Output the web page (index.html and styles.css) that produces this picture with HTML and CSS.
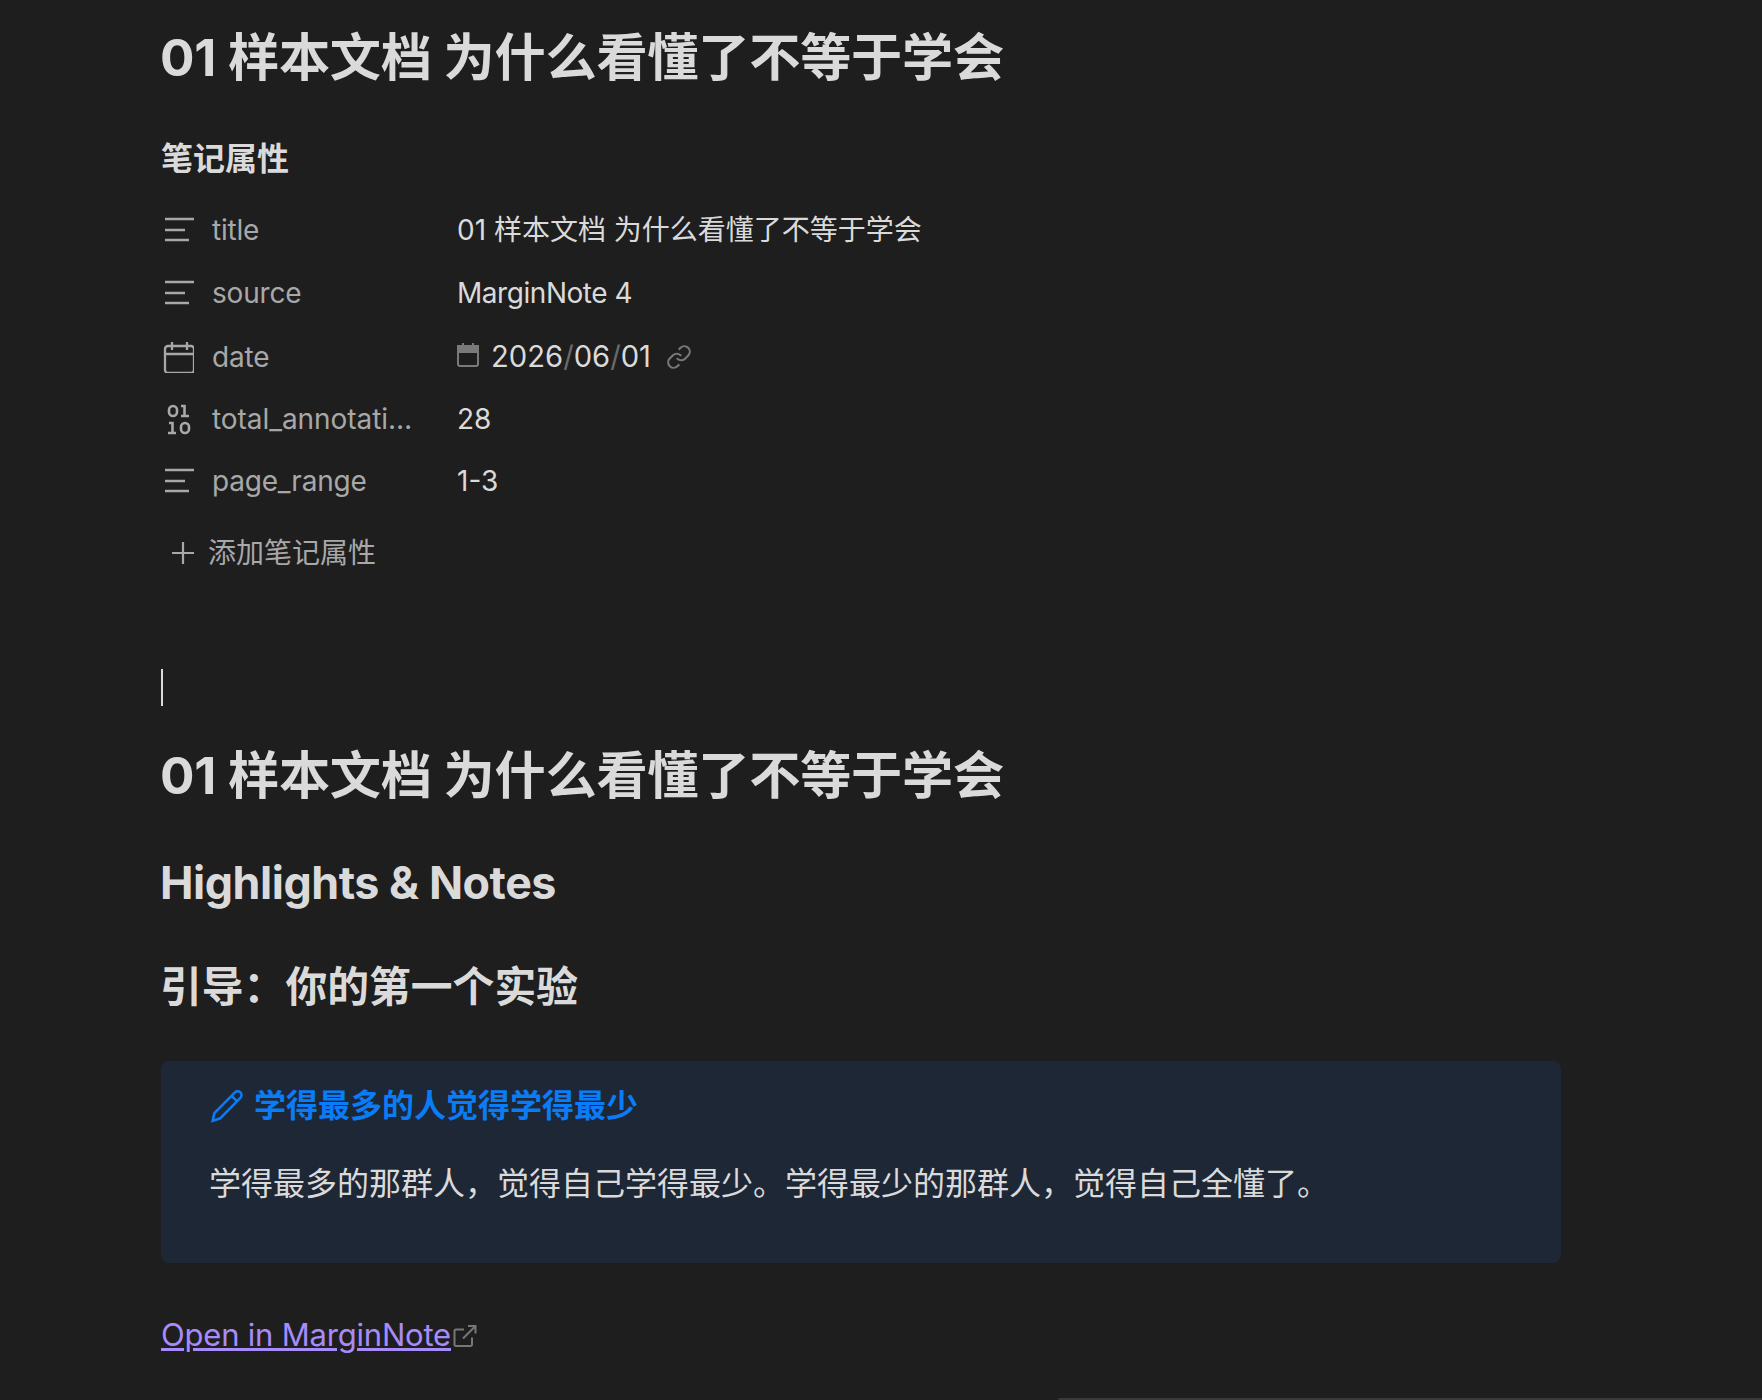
FILE: index.html
```html
<!DOCTYPE html>
<html lang="zh-CN">

<head>
  <meta charset="utf-8">
  <title>01 样本文档 为什么看懂了不等于学会</title>
  <link rel="stylesheet" href="styles.css">
</head>

<body>

<div class="note">
  <h1 class="note-title">01 样本文档 为什么看懂了不等于学会</h1>

  <div class="props-heading">笔记属性</div>
  <div class="props">
    <div class="prop">
      <div class="prop-key">
        <svg class="prop-icon" viewBox="0 0 32 32"><path d="M3 5h29M3 16h20M3 26h24"/></svg>
        <span class="prop-name">title</span>
      </div>
      <div class="prop-value">01 样本文档 为什么看懂了不等于学会</div>
    </div>
    <div class="prop">
      <div class="prop-key">
        <svg class="prop-icon" viewBox="0 0 32 32"><path d="M3 5h29M3 16h20M3 26h24"/></svg>
        <span class="prop-name">source</span>
      </div>
      <div class="prop-value prop-latin">MarginNote 4</div>
    </div>
    <div class="prop">
      <div class="prop-key">
        <svg class="prop-icon" viewBox="0 0 32 32"><rect x="3" y="5" width="29" height="27" rx="3"/><path d="M3 13h29M10 1v8M25 1v8"/></svg>
        <span class="prop-name">date</span>
      </div>
      <div class="prop-value prop-date">
        <svg class="date-cal" viewBox="0 0 22 24"><path class="date-cal-top" d="M1 3h20v6H1z"/><rect x="1" y="4" width="20" height="19" rx="2"/><path d="M6 0v4M16 0v4"/></svg>
        <span class="date-text">2026<i>/</i>06<i>/</i>01</span>
        <svg class="date-link" viewBox="0 0 24 24"><path d="M10 13a5 5 0 0 0 7.54.54l3-3a5 5 0 0 0-7.07-7.07l-1.72 1.71"/><path d="M14 11a5 5 0 0 0-7.54-.54l-3 3a5 5 0 0 0 7.07 7.07l1.71-1.71"/></svg>
      </div>
    </div>
    <div class="prop prop-number">
      <div class="prop-key">
        <svg class="prop-icon binary" viewBox="0 0 32 32"><rect x="7" y="3" width="8" height="10" rx="4"/><path d="M19 3h3.5v10M19 13h8M7 20h3.5v10M6 30h8"/><rect x="19" y="20" width="8" height="10" rx="4"/></svg>
        <span class="prop-name">total_annotati…</span>
      </div>
      <div class="prop-value">28</div>
    </div>
    <div class="prop prop-short">
      <div class="prop-key">
        <svg class="prop-icon" viewBox="0 0 32 32"><path d="M3 5h29M3 16h20M3 26h24"/></svg>
        <span class="prop-name">page_range</span>
      </div>
      <div class="prop-value">1-3</div>
    </div>
  </div>
  <div class="props-add">
    <svg class="add-icon" viewBox="0 0 24 24"><path d="M12 1v22M1 12h22"/></svg>
    <span>添加笔记属性</span>
  </div>

  <div class="caret"></div>

  <h1 class="body-h1">01 样本文档 为什么看懂了不等于学会</h1>
  <h2>Highlights &amp; Notes</h2>
  <h3>引导：你的第一个实验</h3>

  <div class="callout">
    <div class="callout-title">
      <svg class="callout-icon" viewBox="0 0 32 32"><path d="M23.5 3.2a3.6 3.6 0 0 1 5.1 5.1L9.6 27.6 2.5 30l1.6-7.2z"/><path d="M20.5 6.6l5 5"/></svg>
      <span>学得最多的人觉得学得最少</span>
    </div>
    <div class="callout-body">学得最多的那群人，觉得自己学得最少。学得最少的那群人，觉得自己全懂了。</div>
  </div>

  <p class="open-link">
    <a href="#">Open in MarginNote</a><svg class="ext-icon" viewBox="0 0 24 24"><path d="M19 13.5V21a1.5 1.5 0 0 1-1.5 1H3a1.5 1.5 0 0 1-1.5-1V7A1.5 1.5 0 0 1 3 5.5h8"/><path d="M15 2h7.5v7.5M22.5 2 10 14.5"/></svg>
  </p>
</div>

<div class="status-edge"></div>

</body>
</html>
```

FILE: styles.css
```css
html, body {
  margin: 0px;
  padding: 0px;
  height: 100%;
}

body {
  background-color: #1e1e1e;
  color: #dadada;
  font-family: Inter, "Noto Sans CJK SC", sans-serif;
  overflow: hidden;
}

svg {
  fill: none;
  stroke: currentColor;
  flex-shrink: 0;
}

.note {
  width: 1400px;
  margin-left: 161px;
  padding-top: 27px;
}

h1, h2, h3, p {
  margin: 0px;
}

h1 {
  margin-left: -1px;
  font-size: 51.2px;
  line-height: 60px;
  font-weight: 700;
  letter-spacing: -0.25px;
}

.props-heading {
  margin-top: 52px;
  font-size: 32px;
  line-height: 40px;
  font-weight: 600;
}

.props {
  margin-top: 19px;
}

.prop {
  display: flex;
  align-items: center;
  height: 63.5px;
  font-size: 28px;
  line-height: 40px;
}

.prop-number {
  height: 61px;
}

.prop-short {
  height: 62px;
}

.prop-key {
  display: flex;
  align-items: center;
  width: 296px;
  box-sizing: border-box;
  padding-left: 1px;
  color: #a8a8a8;
}

.prop-icon {
  width: 32px;
  height: 32px;
  margin-right: 18px;
  stroke-width: 2.3;
}

.binary {
  stroke-width: 2.6;
}

.prop-name {
  white-space: nowrap;
  letter-spacing: -0.2px;
}

.prop-number .prop-name {
  letter-spacing: -0.05px;
}

.prop-latin {
  letter-spacing: -0.45px;
}

.prop-date {
  display: flex;
  align-items: center;
}

.date-cal {
  width: 22px;
  height: 24px;
  margin-right: 12px;
  color: #7a7a7a;
  stroke-width: 2;
  position: relative;
  top: -2px;
}

.date-cal-top {
  fill: currentColor;
}

.date-text {
  font-size: 29.2px;
}

.date-text i {
  font-style: normal;
  color: #6a6a6a;
}

.date-link {
  width: 26px;
  height: 26px;
  margin-left: 15px;
  color: #777777;
  stroke-width: 2;
}

.props-add {
  display: flex;
  align-items: center;
  height: 62px;
  margin-top: 10px;
  padding-left: 10px;
  font-size: 28px;
  line-height: 40px;
  color: #a8a8a8;
}

.add-icon {
  width: 24px;
  height: 24px;
  margin-right: 13px;
  stroke-width: 2.2;
}

.caret {
  width: 2px;
  height: 37px;
  margin-top: 85px;
  background-color: #dadada;
}

.body-h1 {
  margin-top: 39px;
}

h2 {
  margin-top: 50px;
  margin-left: -1px;
  font-size: 44.8px;
  line-height: 56px;
  font-weight: 700;
  letter-spacing: -0.45px;
}

h3 {
  margin-top: 50px;
  margin-left: -1px;
  font-size: 41.8px;
  line-height: 52px;
  font-weight: 700;
}

.callout {
  margin-top: 48px;
  height: 202px;
  box-sizing: border-box;
  padding: 25px 49px 0px 48px;
  border-radius: 8px;
  background-color: #1d2735;
}

.callout-title {
  display: flex;
  align-items: center;
  font-size: 32px;
  line-height: 40px;
  font-weight: 700;
  color: #0a7cf5;
}

.callout-icon {
  width: 34px;
  height: 34px;
  margin-left: 1px;
  margin-right: 10px;
  stroke-width: 2.4;
}

.callout-body {
  margin-top: 34px;
  font-size: 32px;
  line-height: 48px;
}

.open-link {
  margin-top: 48px;
  font-size: 31px;
  line-height: 48px;
  letter-spacing: -0.2px;
}

.open-link a {
  color: #a78bfa;
}

.ext-icon {
  width: 24px;
  height: 24px;
  margin-left: 2px;
  color: #777777;
  stroke-width: 2;
  vertical-align: -2px;
}

.status-edge {
  position: fixed;
  left: 1058px;
  right: 0px;
  bottom: 0px;
  height: 2px;
  border-top-left-radius: 4px;
  background-color: #3a3a3a;
}
```
